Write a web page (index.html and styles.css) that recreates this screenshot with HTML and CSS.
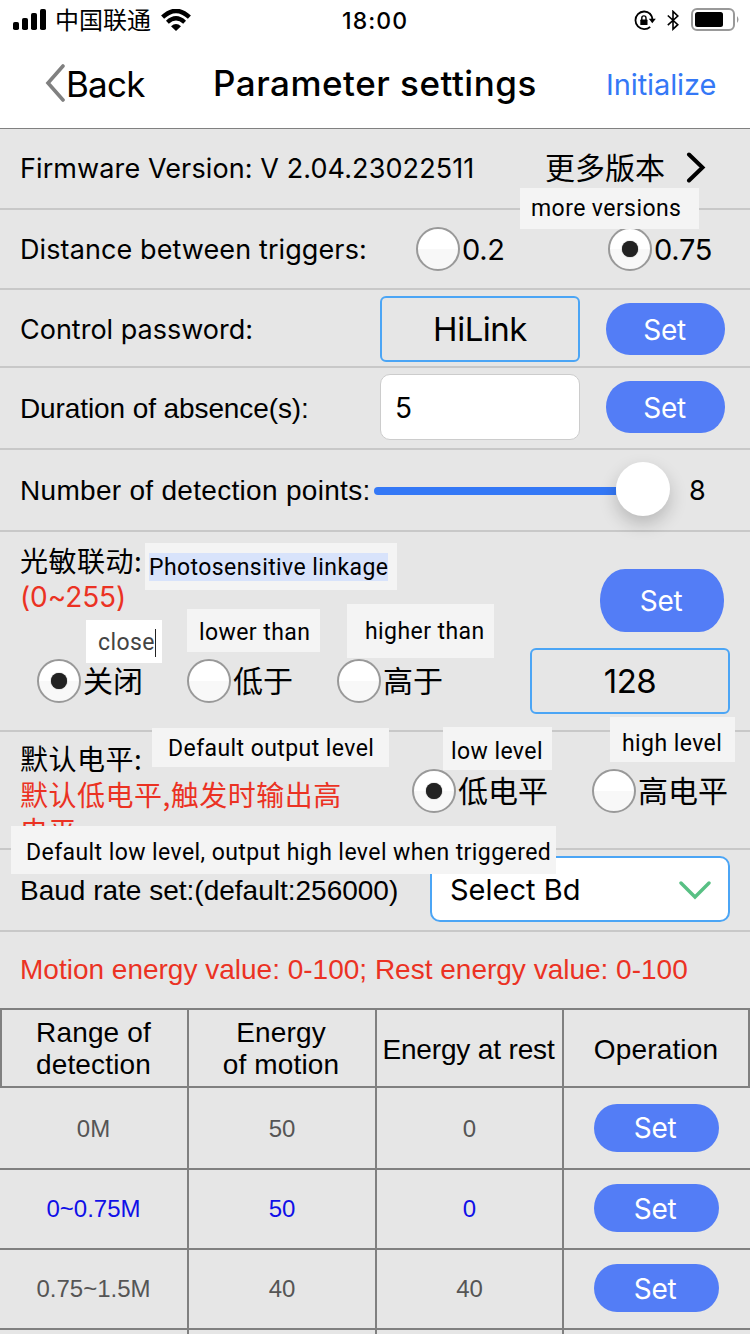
FILE: index.html
```html
<!DOCTYPE html>
<html lang="zh-CN">
<head>
<meta charset="utf-8">
<title>Parameter settings</title>
<link rel="stylesheet" href="styles.css">
</head>
<body>
<header class="top">
  <div class="status">
    <svg class="signal" width="33" height="22" viewBox="0 0 33 22"><rect x="0" y="13" width="6" height="8" rx="1.8"/><rect x="9" y="9" width="6" height="12" rx="1.8"/><rect x="18" y="4" width="6" height="17" rx="1.8"/><rect x="27" y="0" width="6" height="21" rx="1.8"/></svg>
    <span class="carrier">中国联通</span>
    <svg class="wifi" width="30" height="22" viewBox="0 0 30 22"><path d="M1.600 8.200Q15-4.400 28.400 8.200" fill="none" stroke="#000" stroke-width="4.400"/><path d="M6.400 13.200Q15 5.400 23.600 13.200" fill="none" stroke="#000" stroke-width="4.200"/><path d="M10 17.200Q15 13 20 17.200L15 22Z"/></svg>
    <time class="clock">18:00</time>
    <svg class="lock" width="22" height="22" viewBox="0 0 22 22"><path d="M16.200 3.800A8.800 8.800 0 1 0 16.200 16.800" fill="none" stroke="#000" stroke-width="1.800"/><path d="M15.600 3.300Q18.400 6 18.400 10" fill="none" stroke="#000" stroke-width="1.800"/><path d="M14.800 8.800H21.800L18.300 13.200Z"/><rect x="6.300" y="9.600" width="7.200" height="5.400" rx=".6"/><path d="M7.800 10V8a2.100 2.100 0 0 1 4.200 0V10" fill="none" stroke="#000" stroke-width="1.400"/></svg>
    <svg class="bt" width="12" height="21" viewBox="0 0 12 21"><path d="M.8 5.500 10.800 14.700 6 19.200V1.400l4.800 4.600L.8 15.200" fill="none" stroke="#000" stroke-width="1.600"/></svg>
    <svg class="battery" width="49" height="24" viewBox="0 0 49 24"><rect x="1" y="1" width="42" height="21" rx="5" fill="none" stroke="#999" stroke-width="2"/><rect x="4" y="4" width="28" height="15" rx="2.500"/><path d="M46 8q3 3.500 0 7Z" fill="#999"/></svg>
  </div>
  <nav class="nav">
    <svg class="chev-back" width="20" height="38" viewBox="0 0 20 38"><path d="M18 2 3 19 18 36" fill="none" stroke="#808080" stroke-width="3.600" stroke-linecap="round"/></svg>
    <span class="back">Back</span>
    <h1 class="title">Parameter settings</h1>
    <span class="init">Initialize</span>
  </nav>
</header>

<main>
  <section class="row r1">
    <span class="label firmware">Firmware Version: V 2.04.23022511</span>
    <span class="more">更多版本</span>
    <svg class="chev" width="22" height="32" viewBox="0 0 22 32"><path d="M3 2.500 16.500 15.500 3 28.500" fill="none" stroke="#000" stroke-width="4" stroke-linecap="round" stroke-linejoin="miter"/></svg>
    <span class="note n-more">more versions</span>
  </section>

  <section class="row r2">
    <span class="label distance">Distance between triggers:</span>
    <span class="opt"><i class="radio"></i><span class="num">0.2</span></span>
    <span class="opt last"><i class="radio on"></i><span class="num">0.75</span></span>
  </section>

  <section class="row r3">
    <span class="label password">Control password:</span>
    <span class="field hilink">HiLink</span>
    <span class="btn">Set</span>
  </section>

  <section class="row r4">
    <span class="label helv duration">Duration of absence(s):</span>
    <span class="field white">5</span>
    <span class="btn">Set</span>
  </section>

  <section class="row r5">
    <span class="label helv points">Number of detection points:</span>
    <span class="slider"><i class="track"></i><i class="thumb"></i></span>
    <span class="value">8</span>
  </section>

  <section class="row r6">
    <div class="light-top">
      <div class="light-label">光敏联动:<span class="red range">(0~255)</span></div>
      <span class="btn tall">Set</span>
    </div>
    <div class="light-bottom">
      <span class="opt w150"><i class="radio on"></i><span class="cjk">关闭</span></span>
      <span class="opt w150"><i class="radio"></i><span class="cjk">低于</span></span>
      <span class="opt w150"><i class="radio"></i><span class="cjk">高于</span></span>
      <span class="field n128">128</span>
    </div>
    <span class="note n-photo"><mark class="sel">Photosensitive linkage</mark></span>
    <span class="note n-close">close<i class="caret"></i></span>
    <span class="note n-lower">lower than</span>
    <span class="note n-higher">higher than</span>
  </section>

  <section class="row r7">
    <div class="level-label">默认电平:<span class="red">默认低电平,触发时输出高<br>电平</span></div>
    <span class="opt w180"><i class="radio on"></i><span class="cjk">低电平</span></span>
    <span class="opt last"><i class="radio"></i><span class="cjk">高电平</span></span>
    <span class="note n-default">Default output level</span>
    <span class="note n-lowl">low level</span>
    <span class="note n-highl">high level</span>
    <span class="note n-trig">Default low level, output high level when triggered</span>
  </section>

  <section class="row r8">
    <span class="label helv baud">Baud rate set:(default:256000)</span>
    <span class="select"><span class="seltext">Select Bd</span><svg class="chev-down" width="32" height="20" viewBox="0 0 32 20"><path d="M2 2 16 16 30 2" fill="none" stroke="#58c084" stroke-width="3.400" stroke-linecap="round"/></svg></span>
  </section>

  <p class="red energy">Motion energy value: 0-100; Rest energy value: 0-100</p>

  <div class="table">
    <div class="tr th"><span class="td two">Range of<br>detection</span><span class="td two">Energy<br>of motion</span><span class="td rest">Energy at rest</span><span class="td">Operation</span></div>
    <div class="tr first"><span class="td">0M</span><span class="td">50</span><span class="td">0</span><span class="td"><b class="btn small">Set</b></span></div>
    <div class="tr blue"><span class="td">0~0.75M</span><span class="td">50</span><span class="td">0</span><span class="td"><b class="btn small">Set</b></span></div>
    <div class="tr"><span class="td">0.75~1.5M</span><span class="td">40</span><span class="td">40</span><span class="td"><b class="btn small">Set</b></span></div>
    <div class="tr cut"><span class="td"></span><span class="td"></span><span class="td"></span><span class="td"></span></div>
  </div>
</main>
</body>
</html>
```

FILE: styles.css
```css
* { box-sizing: border-box; }
body {
  margin: 0;
  width: 750px;
  height: 1334px;
  overflow: hidden;
  background: #e6e6e6;
  color: #000;
  font-family: Inter, "Noto Sans CJK SC", sans-serif;
  font-size: 27px;
  white-space: nowrap;
}
i { font-style: normal; }
svg { display: block; flex: none; }

/* Status bar and navigation */
.top { height: 129px; background: #fff; border-bottom: 1px solid #808080; }
.status { display: flex; height: 40px; padding-left: 13px; align-items: flex-start; }
.signal { margin-top: 9px; }
.carrier { width: 97px; margin: 1px 0 0 9px; font: 24px/36px "Noto Sans CJK SC", sans-serif; }
.wifi { margin: 9px 0 0 9px; }
.clock { width: 80px; margin: 3px 0 0 151px; font-size: 23px; font-weight: 500; line-height: 36px; letter-spacing: 1.1px; }
.lock { margin: 10px 0 0 212px; }
.bt { margin: 10px 0 0 11px; }
.battery { margin: 8px 0 0 12px; }
.nav { display: flex; height: 88px; align-items: center; padding-left: 45px; }
.chev-back { margin-top: -3px; }
.back { width: 147px; margin-left: 1px; font-size: 35px; letter-spacing: -.8px; }
.title { width: 393px; margin: -2px 0 0; font-size: 35px; font-weight: 500; letter-spacing: .5px; }
.init { color: #3478f6; font-size: 29px; letter-spacing: -.1px; }

/* Setting rows */
.row { position: relative; display: flex; align-items: center; border-bottom: 2px solid #c8c8c8; padding-left: 20px; }
.label { flex: none; }
.helv { font-family: "Liberation Sans", sans-serif; font-size: 28px; }
.red { color: #eb3223; }
.r1 { height: 81px; }
.firmware { width: 525px; letter-spacing: .1px; }
.more { width: 141px; margin-top: -6px; font: 30px/40px "Noto Sans CJK SC", sans-serif; }
.chev { margin-top: -2px; }
.r2 { height: 80px; }
.distance { width: 396px; letter-spacing: .1px; }
.opt { display: flex; flex: none; align-items: center; width: 192px; }
.opt.last { width: auto; }
.radio { display: flex; flex: none; width: 44px; height: 44px; border: 2px solid #999; border-radius: 50%; background: linear-gradient(#fff 50%, #f8f8f8 50%); align-items: center; justify-content: center; }
.on::after { content: ""; width: 16px; height: 16px; border-radius: 50%; background: #222; box-shadow: 0 0 1px #222; }
.num { margin-left: 2px; font-size: 29px; letter-spacing: -.3px; }
.cjk { margin: -5px 0 0 2px; font: 30px/40px "Noto Sans CJK SC", sans-serif; }
.r3 { height: 78px; padding-top: 2px; }
.password, .duration { width: 360px; }
.duration { margin-top: 4px; letter-spacing: -.1px; }
.field { display: flex; flex: none; width: 200px; height: 66px; align-items: center; justify-content: center; border: 2px solid #4ba5f5; border-radius: 6px; font-size: 33px; letter-spacing: -.5px; }
.white { justify-content: flex-start; padding: 2px 0 0 14px; background: #fff; border: 1px solid #ccc; border-radius: 10px; font-size: 28px; }
.btn { display: flex; flex: none; width: 119px; height: 52px; margin-left: 26px; align-items: center; justify-content: center; border-radius: 24px / 26px; background: #537df6; color: #fff; font-size: 28px; font-weight: 400; letter-spacing: -.3px; padding: 1px 2px 0 0; }
.r4 { height: 82px; padding-bottom: 2px; }
.r5 { height: 82px; }
.points { width: 354px; margin-top: 2px; letter-spacing: .3px; }
.slider { display: flex; width: 296px; align-items: center; padding-bottom: 2px; }
.track { width: 242px; height: 8px; margin-top: 4px; border-radius: 4px 0 0 4px; background: #3478f6; }
.thumb { position: relative; z-index: 1; width: 54px; height: 54px; border-radius: 50%; background: #fff; box-shadow: 0 8px 18px rgba(0,0,0,.2); }
.value { margin-left: 19px; }
.r6 { display: block; height: 200px; }
.light-top { display: flex; height: 116px; }
.light-label, .level-label { flex: none; font: 28px/36px "Noto Sans CJK SC", sans-serif; letter-spacing: .5px; }
.light-label { width: 580px; padding-top: 10px; }
.light-label .range, .level-label .red { display: block; }
.light-label .range { padding-top: 1px; font: 28px/36px Inter, sans-serif; letter-spacing: -.1px; }
.btn.tall { width: 124px; height: 63px; margin: 37px 0 0; border-radius: 25px / 31px; padding-top: 0; }
.light-bottom { display: flex; align-items: center; height: 66px; padding-left: 17px; }
.w150 { width: 150px; }
.n128 { margin-left: 43px; }
.w180 { width: 180px; }
.r7 { height: 118px; }
.level-label { align-self: flex-start; width: 392px; height: 116px; padding-top: 8px; overflow: hidden; }
.r7 .opt { margin-top: 2px; }
.r8 { height: 82px; padding-bottom: 2px; }
.baud { width: 410px; margin-top: 4px; }
.select { display: flex; width: 300px; height: 66px; align-items: center; justify-content: space-between; padding: 0 17px 0 18px; background: #fff; border: 2px solid #4ba5f5; border-radius: 10px; font-size: 29px; }
.chev-down { margin-top: 4px; }
.energy { margin: 0; height: 76px; padding-left: 20px; font: 28px/76px "Liberation Sans", sans-serif; }

/* Translation notes laid over the controls */
.note { position: absolute; z-index: 2; background: #f4f4f4; font: 23px/42px Roboto, sans-serif; letter-spacing: .42px; }
.n-more { left: 520px; top: 59px; width: 179px; height: 41px; padding-left: 11px; }
.n-photo { left: 145px; top: 11px; width: 252px; height: 47px; padding: 10px 4px; line-height: 30px; }
.sel { display: block; width: 239px; height: 28px; background: #d8e3fb; color: inherit; }
.n-close { display: flex; left: 86px; top: 88px; width: 76px; height: 43px; padding: 2px 0 0 12px; align-items: center; background: #fff; color: #444; }
.caret { width: 1px; height: 28px; background: #222; }
.n-lower { left: 187px; top: 77px; width: 133px; height: 43px; padding-left: 12px; line-height: 47px; }
.n-higher { left: 347px; top: 72px; width: 147px; height: 54px; padding-left: 18px; line-height: 56px; }
.n-default { left: 152px; top: -4px; width: 237px; height: 39px; padding-left: 16px; }
.n-lowl { left: 443px; top: -5px; width: 109px; height: 43px; padding-left: 8px; line-height: 49px; }
.n-highl { left: 610px; top: -15px; width: 125px; height: 45px; padding-left: 12px; line-height: 54px; }
.n-trig { left: 11px; top: 94px; width: 545px; height: 48px; padding-left: 15px; line-height: 54px; }

/* Energy table */
.table { font: 24px "Liberation Sans", sans-serif; color: #555; }
.tr { display: grid; grid-template-columns: 189px 188px 187px 186px; height: 80px; border-bottom: 2px solid #808080; }
.td { display: flex; align-items: center; justify-content: center; text-align: center; border-right: 2px solid #808080; }
.td:last-child { border-right: 0; padding: 0 2px 2px 0; }
.th { height: 80px; border: 2px solid #808080; grid-template-columns: 187px 188px 187px 184px; font-size: 28px; line-height: 32px; color: #000; }
.th .td { padding-top: 3px; letter-spacing: .15px; }
.th .two { padding: 1px 2px 0 0; }
.th .td:last-child { padding: 3px 0 0; }
.th .rest { padding-right: 2px; letter-spacing: -.15px; }
.first { height: 82px; }
.first .td { padding-top: 1px; }
.cut { height: 4px; border-bottom: 0; }
.cut .td { padding: 0; }
.blue { color: #1010e8; }
.btn.small { width: 125px; height: 48px; margin: 0; border-radius: 23px / 24px; font-family: Inter, sans-serif; }
```
